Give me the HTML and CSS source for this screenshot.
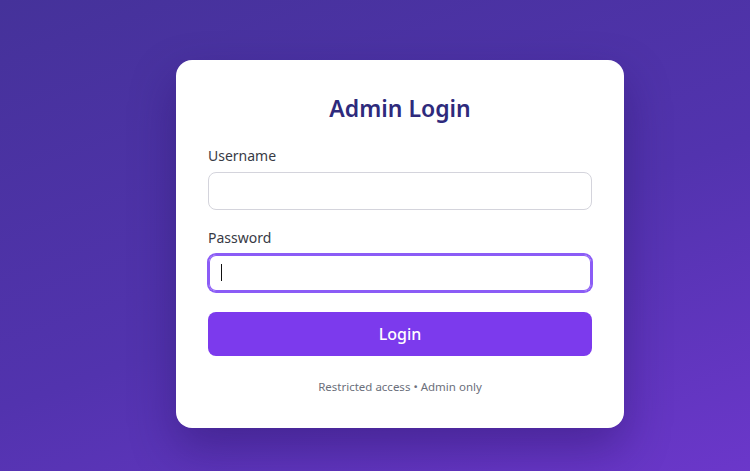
FILE: index.html
```html
<!DOCTYPE html>
<html lang="en">
<head>
    <meta charset="UTF-8">
    <meta name="viewport" content="width=device-width, initial-scale=1.0">
    <title>Admin Login</title>
    <link rel="stylesheet" href="styles.css">
</head>
<body>
    <div class="page">
        <form class="login-card" onsubmit="return false;">
            <h1>Admin Login</h1>

            <div class="field">
                <label for="username">Username</label>
                <input type="text" id="username" autocomplete="off">
            </div>

            <div class="field">
                <label for="password">Password</label>
                <div class="input-wrap">
                    <input type="password" id="password" class="is-focused">
                    <span class="caret"></span>
                </div>
            </div>

            <button type="submit">Login</button>

            <p class="note">Restricted access &bull; Admin only</p>
        </form>
    </div>
</body>
</html>
```

FILE: styles.css
```css
* {
    margin: 0;
    padding: 0;
    box-sizing: border-box;
    font-family: "Noto Sans", "Open Sans", sans-serif;
}
html, body {
    height: 100%;
}
body {
    background: linear-gradient(160deg, #45329a 0%, #5233ae 55%, #6b37ca 100%);
    overflow: hidden;
}
.page {
    height: 100%;
    display: flex;
    align-items: center;
    justify-content: center;
    padding: 17px 0 0 50px;
}
.login-card {
    width: 448px;
    background: #fff;
    border-radius: 16px;
    padding: 32px;
    box-shadow: 0 20px 45px rgba(30, 10, 80, 0.35);
}
h1 {
    font-size: 23px;
    line-height: 32px;
    font-weight: 600;
    color: #2e2a7c;
    text-align: center;
    margin-bottom: 22px;
}
.field {
    margin-bottom: 18px;
}
.field label {
    display: block;
    font-size: 14px;
    line-height: 20px;
    color: #383a45;
    margin-bottom: 6px;
}
.input-wrap {
    position: relative;
}
.field input {
    display: block;
    width: 100%;
    height: 38px;
    padding: 0 12px;
    font-size: 15px;
    border: 1px solid #d4d4dc;
    border-radius: 8px;
    outline: none;
    color: #222;
}
.field input:focus,
.field input.is-focused {
    border-color: #8b5cf6;
    box-shadow: 0 0 0 1px #8b5cf6, inset 0 0 0 1px #8b5cf6;
    caret-color: transparent;
}
.caret {
    position: absolute;
    left: 13px;
    top: 10px;
    width: 1px;
    height: 17px;
    background: #111;
}
button {
    display: block;
    width: 100%;
    height: 44px;
    margin-top: 20px;
    background: #7c3aed;
    color: #fff;
    border: none;
    border-radius: 8px;
    font-size: 16px;
    font-weight: 500;
    cursor: pointer;
}
button:hover {
    background: #6d28d9;
}
.note {
    margin-top: 22px;
    font-size: 11.5px;
    line-height: 18px;
    color: #6b6f7b;
    text-align: center;
}
```
